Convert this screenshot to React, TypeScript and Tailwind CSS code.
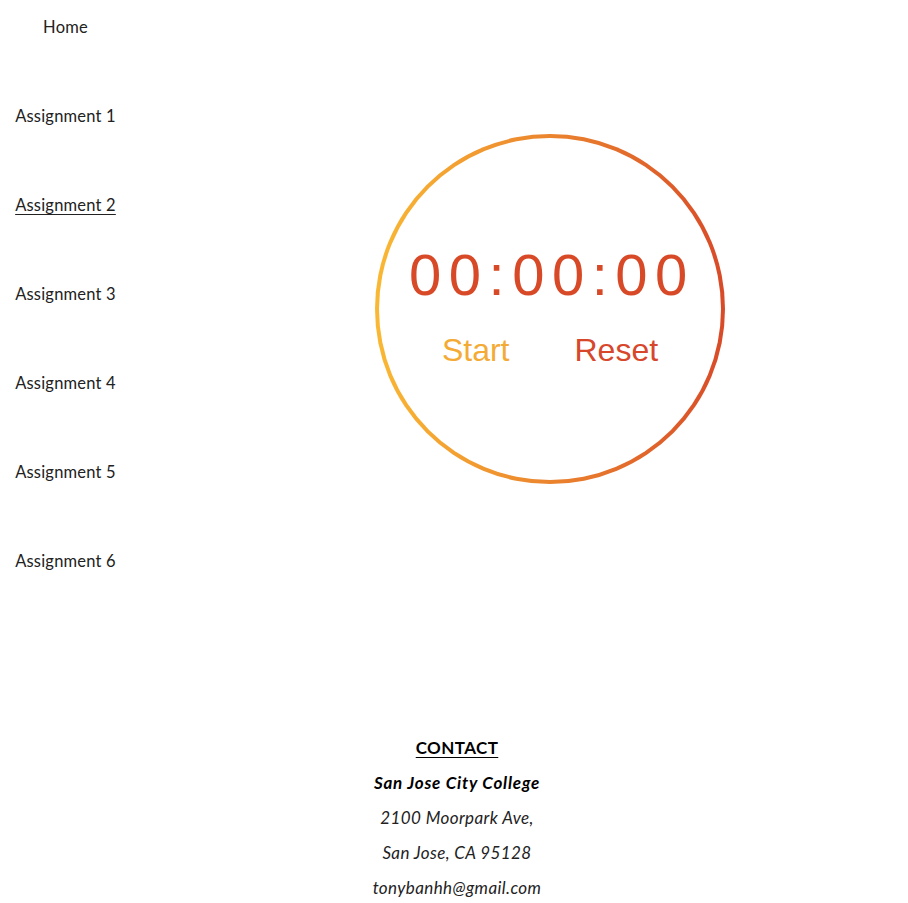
import React from "react";

const links = ["Home", "Assignment 1", "Assignment 2", "Assignment 3", "Assignment 4", "Assignment 5", "Assignment 6"];

export default function App() {
  return (
    <div className="min-h-[903px] bg-white font-['Lato','Open_Sans',sans-serif] text-[#222]">
      <div className="flex">
        <nav className="flex w-[131px] shrink-0 flex-col items-center gap-[65px] pt-[15px]">
          {links.map((l) => (
            <a
              key={l}
              href="#"
              className={
                "text-[16.5px] leading-[24px] tracking-[0.2px] whitespace-nowrap " +
                (l === "Assignment 2" ? "underline underline-offset-[3px]" : "")
              }
            >
              {l}
            </a>
          ))}
        </nav>

        <main className="flex flex-1 justify-center pl-[61px] pt-[134px]">
          <div className="h-[350px] w-[350px] rounded-full bg-gradient-to-r from-[#f9b833] to-[#d84a28] p-[4px]">
            <div className="flex h-full w-full flex-col items-center rounded-full bg-white pt-[104px] font-['Liberation_Sans',Arial,sans-serif]">
              <div className="pl-[4px] text-[58px] leading-[66px] tracking-[7.5px] text-[#d84a27]">00:00:00</div>
              <div className="mt-[24px] flex gap-[65px] text-[32px] leading-[37px]">
                <button className="text-[#f4ab36]">Start</button>
                <button className="text-[#d6472c]">Reset</button>
              </div>
            </div>
          </div>
        </main>
      </div>

      <footer className="mt-[163px] flex flex-col items-center gap-[11px] pl-[6px] text-[17px] leading-[24px] tracking-[0.4px] text-black">
        <p className="font-bold underline underline-offset-[3px]">CONTACT</p>
        <p className="font-bold italic tracking-[0.8px]">San Jose City College</p>
        <p className="italic text-[#222]">2100 Moorpark Ave,</p>
        <p className="italic text-[#222]">San Jose, CA 95128</p>
        <p className="italic text-[#222]">tonybanhh@gmail.com</p>
      </footer>
    </div>
  );
}
